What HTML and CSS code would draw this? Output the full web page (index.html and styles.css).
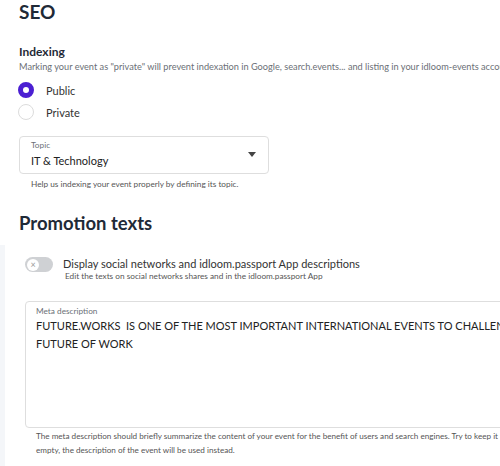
FILE: index.html
```html
<!DOCTYPE html>
<html>
<head>
<meta charset="utf-8">
<link rel="stylesheet" href="styles.css">
</head>
<body>
<div class="page">
  <section class="seo">
    <h1 class="title">SEO</h1>
    <h2 class="subtitle">Indexing</h2>
    <p class="desc">Marking your event as "private" will prevent indexation in Google, search.events... and listing in your idloom-events account.</p>
    <div class="radios">
      <label class="radio-row"><span class="radio checked"></span><span class="radio-label">Public</span></label>
      <label class="radio-row"><span class="radio"></span><span class="radio-label">Private</span></label>
    </div>
    <div class="select">
      <div class="field-label">Topic</div>
      <div class="select-value">IT &amp; Technology</div>
      <span class="caret"></span>
    </div>
    <p class="help">Help us indexing your event properly by defining its topic.</p>
    <h1 class="title promo-title">Promotion texts</h1>
  </section>
  <section class="promo">
    <div class="strip"></div>
    <div class="promo-body">
      <div class="toggle-row">
        <span class="toggle"><span class="knob">×</span></span>
        <div class="toggle-text">
          <div class="toggle-label">Display social networks and idloom.passport App descriptions</div>
          <div class="toggle-sub">Edit the texts on social networks shares and in the idloom.passport App</div>
        </div>
      </div>
      <div class="textarea">
        <div class="field-label">Meta description</div>
        <div class="textarea-value">FUTURE.WORKS&nbsp; IS ONE OF THE MOST IMPORTANT INTERNATIONAL EVENTS TO CHALLENGE THE<br>FUTURE OF WORK</div>
      </div>
      <p class="help wide">The meta description should briefly summarize the content of your event for the benefit of users and search engines. Try to keep it<br>empty, the description of the event will be used instead.</p>
    </div>
  </section>
</div>
</body>
</html>
```
FILE: styles.css
```css
* { box-sizing: border-box; }
html, body { margin: 0; padding: 0; background: #fff; overflow: hidden; }
body { font-family: "Lato", sans-serif; color: #333; }
.page { width: 500px; height: 466px; overflow: hidden; }
.seo { padding-left: 19px; }
.title {
  margin: 0;
  font-size: 19px;
  line-height: 24px;
  font-weight: 700;
  color: #1f2a37;
  white-space: nowrap;
}
.promo-title { font-size: 18.5px; margin-top: 21px; }
.subtitle {
  margin: 20px 0 0;
  font-size: 12px;
  line-height: 16px;
  font-weight: 700;
  color: #1f2a37;
}
.desc {
  margin: 0;
  font-size: 9.2px;
  line-height: 13px;
  color: #6b6f76;
  white-space: nowrap;
}
.radios { margin-top: 9px; display: flex; flex-direction: column; gap: 6px; }
.radio-row { display: flex; align-items: center; height: 16px; }
.radio {
  width: 16px; height: 16px; border-radius: 50%;
  border: 1px solid #dcdcdc; background: #fff; flex: none;
  margin-left: -1px;
}
.radio.checked { border: 5px solid #4b1fd2; }
.radio-label { margin-left: 12px; font-size: 11px; color: #333; }
.select {
  position: relative;
  margin-top: 16px;
  width: 250px; height: 38px;
  border: 1px solid #dedede; border-radius: 4px;
  padding: 3px 11px 0;
}
.field-label { font-size: 8.25px; line-height: 11px; color: #6b6f76; }
.select-value { font-size: 11px; line-height: 16px; color: #222; margin-top: 2px; }
.caret {
  position: absolute; right: 12px; top: 15px;
  width: 0; height: 0;
  border-left: 4.5px solid transparent; border-right: 4.5px solid transparent;
  border-top: 5px solid #444;
}
.help {
  margin: 5px 0 0 12px;
  font-size: 8.25px; line-height: 11px; color: #555;
  white-space: nowrap;
}
.promo { display: flex; margin-top: 10px; }
.strip { width: 5px; background: #f4f6f9; flex: none; }
.promo-body { padding-left: 20px; flex: 1; padding-bottom: 20px; }
.toggle-row { display: flex; align-items: flex-start; margin-top: 12px; }
.toggle {
  width: 28px; height: 15px; border-radius: 8px; background: #cfd1d4;
  position: relative; flex: none;
}
.knob {
  position: absolute; left: 2px; top: 1.5px;
  width: 12px; height: 12px; border-radius: 50%; background: #fff;
  font-size: 9px; line-height: 12px; text-align: center; color: #9a9a9a;
}
.toggle-text { margin-left: 10px; }
.toggle-label { font-size: 11px; line-height: 14px; color: #333; white-space: nowrap; }
.toggle-sub { font-size: 8.25px; line-height: 11px; color: #555; margin-left: 2px; white-space: nowrap; }
.textarea {
  margin-top: 19px;
  width: 620px; height: 127px;
  border: 1px solid #dedede; border-radius: 4px;
  padding: 4px 10px 0;
}
.textarea .field-label { line-height: 10px; }
.textarea-value { font-size: 11px; line-height: 18px; color: #222; white-space: nowrap; margin-top: 1px; }
.help.wide { margin: 1px 0 0 11px; line-height: 14px; font-size: 8.15px; }
```
